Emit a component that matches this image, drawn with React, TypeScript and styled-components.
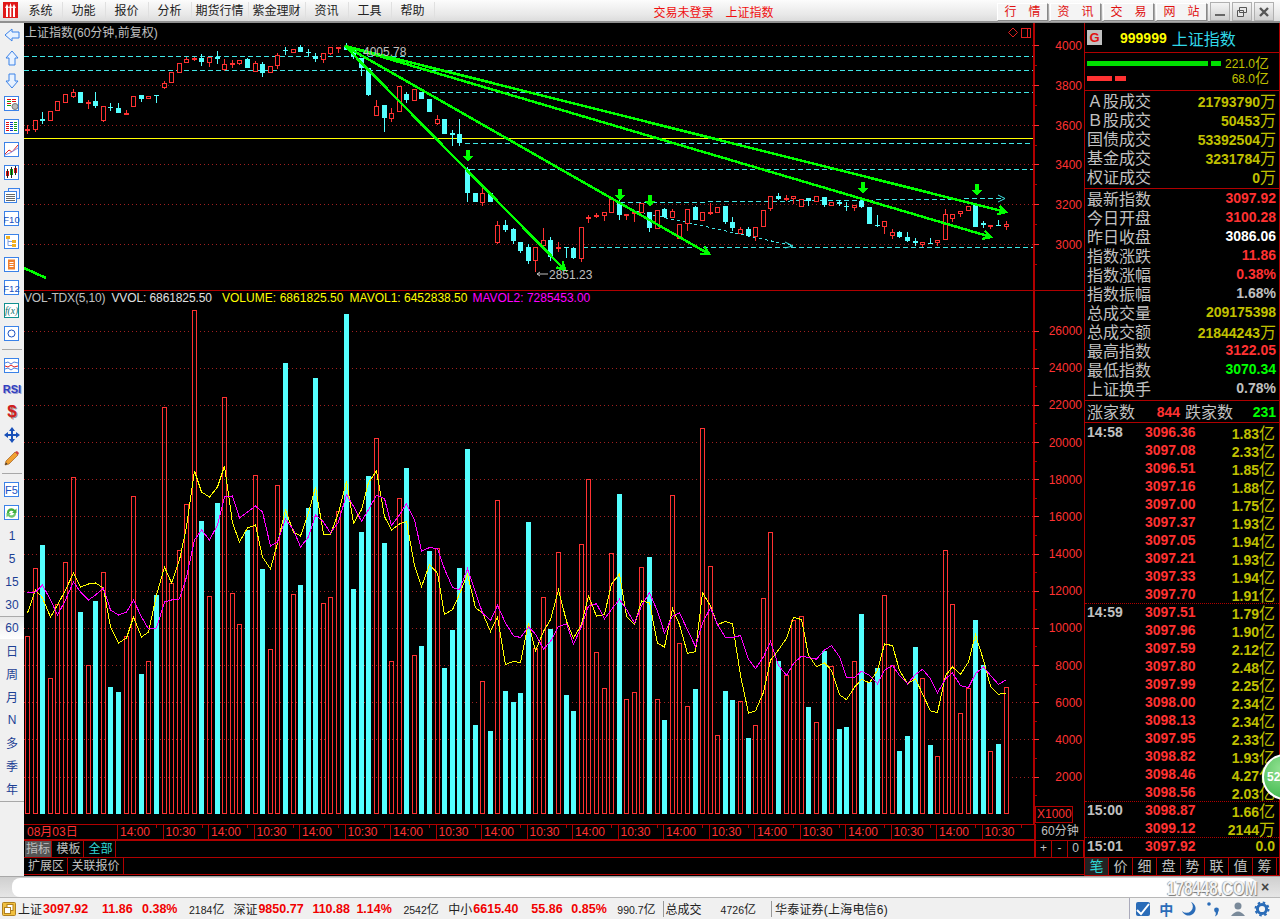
import React from "react";
import styled, { createGlobalStyle } from "styled-components";

const FONT = `"Liberation Sans","Noto Sans CJK SC",sans-serif`;
const LINE = "#b00000";
const RED = "#ff3232";
const CYAN = "#54ffff";
const OLIVE = "#c0c000";
const GRAY = "#c0c0c0";

const Global = createGlobalStyle`
  html, body { margin: 0; padding: 0; background: #000; }
  #root { width: 1280px; height: 919px; overflow: hidden; }
  * { box-sizing: border-box; }
`;

/* ---------- styled parts ---------- */
const Page = styled.div`
  width: 1280px;
  height: 919px;
  display: flex;
  flex-direction: column;
  background: #000;
  font-family: ${FONT};
  overflow: hidden;
`;
const TopBar = styled.div`
  height: 23px;
  flex: none;
  display: flex;
  align-items: center;
  padding-top: 2px;
  background: linear-gradient(#fcfcfc, #e8e8e8 70%, #dcdcdc);
  border-bottom: 2px solid #909090;
`;
const Logo = styled.div`
  width: 19.5px;
  padding-left: 3px;
  display: flex;
  align-self: flex-start;
`;
const MenuItem = styled.div<{ $w: number }>`
  width: ${(p) => p.$w}px;
  text-align: center;
  font-size: 12px;
  color: #222;
  line-height: 19px;
  border-right: 1px solid #e0e0e0;
`;
const Notice = styled.div<{ $gap?: number }>`
  margin-left: ${(p) => p.$gap ?? 219}px;
  font-size: 12px;
  color: #f01010;
`;
const TopButtons = styled.div`
  margin-left: auto;
  display: flex;
  gap: 2px;
`;
const TopButton = styled.div`
  width: 51px;
  height: 18px;
  font-size: 12px;
  line-height: 17px;
  text-align: center;
  color: #e01010;
  background: #f4f4f4;
  border: 1px solid;
  border-color: #fff #888 #888 #fff;
  box-shadow: 1px 1px 0 #aaa;
`;
const WinButtons = styled.div`
  margin-left: 3px;
  margin-right: 6px;
  display: flex;
  gap: 2px;
`;
const WinButton = styled.div`
  width: 20px;
  height: 19px;
  display: flex;
  align-items: center;
  justify-content: center;
  background: linear-gradient(#f4f4f4, #d0d0d0);
  border: 1px solid #b0b0b0;
`;
const Body = styled.div`
  flex: 1;
  display: flex;
  min-height: 0;
`;
const Sidebar = styled.div`
  width: 24px;
  flex: none;
  display: flex;
  flex-direction: column;
  background: #f0f0f0;
`;
const SideItem = styled.div<{ $active?: boolean }>`
  height: 23px;
  flex: none;
  display: flex;
  align-items: center;
  justify-content: center;
  font-size: 12px;
  color: #1c3f94;
  ${(p) => p.$active && `background: linear-gradient(#e8e8e8, #fff); border-top: 1px solid #aaa;`}
`;
const SideRule = styled.div`
  height: 1px;
  margin: 4px 2px 4px;
  background: #a8a8a8;
  flex: none;
`;
const SideEnd = styled.div`
  border-top: 1px solid #a8a8a8;
  margin-top: 1px;
  flex: 1;
`;
const RsiGlyph = styled.span`
  font: bold 11px "Liberation Sans", sans-serif;
  color: #3040c0;
  text-shadow: 1px 1px 0 #a0a0d0;
`;
const DollarGlyph = styled.span`
  font: bold 17px "Liberation Sans", sans-serif;
  color: #d02020;
  text-shadow: 1px 1px 0 #999;
`;
const Main = styled.div`
  width: 1060px;
  flex: none;
  display: flex;
  flex-direction: column;
`;
const Pane = styled.div<{ $h: number; $noBorder?: boolean }>`
  position: relative;
  height: ${(p) => p.$h}px;
  flex: none;
  ${(p) => !p.$noBorder && `border-bottom: 1px solid ${LINE};`}
`;
const ChartSvg = styled.svg`
  display: block;
`;
const ChartText = styled.text`
  font: 12px "Liberation Sans", sans-serif;
`;
const PaneTitle = styled.div`
  position: absolute;
  left: 1px;
  top: 3px;
  font-size: 12px;
  line-height: 14px;
  color: ${GRAY};
`;
const IndicatorLine = styled.div`
  position: absolute;
  left: 0;
  top: 0;
  display: flex;
  font-size: 12px;
  line-height: 14px;
`;
const Ind = styled.span<{ $c: string; $ml?: number; $ls?: number }>`
  color: ${(p) => p.$c};
  margin-left: ${(p) => p.$ml ?? 0}px;
  letter-spacing: ${(p) => p.$ls ?? 0}px;
`;
const TimeRow = styled.div`
  height: 16px;
  flex: none;
  display: flex;
`;
const TimeAxis = styled.div`
  width: 1010px;
  display: flex;
  border-top: 1px solid ${LINE};
  border-bottom: 1px solid ${LINE};
`;
const DateCell = styled.div`
  width: 93px;
  flex: none;
  padding-left: 3px;
  font-size: 12px;
  line-height: 14px;
  color: ${RED};
`;
const TimeCell = styled.div`
  position: relative;
  width: 45.5px;
  flex: none;
  padding-left: 2px;
  font-size: 12px;
  line-height: 14px;
  color: ${RED};
  border-left: 1px solid ${LINE};
  &::after {
    content: "";
    position: absolute;
    left: 38px;
    top: 0;
    width: 1px;
    height: 3px;
    background: ${LINE};
  }
`;
const PeriodCell = styled.div`
  flex: 1;
  text-align: center;
  font-size: 12px;
  line-height: 15px;
  color: ${GRAY};
  border-left: 2px solid ${LINE};
`;
const TabRow = styled.div`
  height: 17px;
  flex: none;
  display: flex;
  justify-content: space-between;
  border-top: 1px solid ${LINE};
  padding-left: 1px;
`;
const TabBar = styled.div`
  display: flex;
  gap: 2px;
`;
const ExtRow = styled.div`
  height: 18px;
  flex: none;
  display: flex;
  padding-left: 1px;
  border-top: 1px solid ${LINE};
  border-bottom: 1px solid ${LINE};
`;
const Tab = styled.div<{ $w: number; $active?: boolean; $cyan?: boolean }>`
  width: ${(p) => p.$w}px;
  text-align: center;
  font-size: 12px;
  line-height: 17px;
  color: ${(p) => (p.$cyan ? "#30d8d8" : GRAY)};
  background: ${(p) => (p.$active ? "#555" : "transparent")};
  border-right: 1px solid ${LINE};
`;
const ZoomCells = styled.div`
  width: 50px;
  display: flex;
  border-left: 2px solid ${LINE};
`;
const ZoomCell = styled.div`
  flex: 1;
  text-align: center;
  font-size: 12px;
  line-height: 15px;
  color: ${GRAY};
  border-right: 1px solid ${LINE};
`;
const Panel = styled.div`
  position: relative;
  width: 196px;
  flex: none;
  display: flex;
  flex-direction: column;
  border-left: 1px solid ${LINE};
  border-right: 1px solid ${LINE};
  color: ${GRAY};
`;
const Head = styled.div`
  height: 30px;
  flex: none;
  display: flex;
  align-items: center;
  padding-left: 2px;
  border-bottom: 1px solid ${LINE};
`;
const GBox = styled.div`
  width: 15px;
  height: 15px;
  text-align: center;
  background: #c0c0c0;
  color: #e01010;
  font: bold 13px/15px "Liberation Sans", sans-serif;
`;
const Code = styled.div`
  margin-left: 18px;
  font-weight: bold;
  font-size: 14px;
  color: #ffff00;
`;
const CodeName = styled.div`
  margin-left: 5px;
  font-size: 16px;
  color: #30d8e8;
`;
const Flow = styled.div`
  height: 38px;
  flex: none;
  padding: 3px 0 0 2px;
  border-bottom: 1px solid ${LINE};
`;
const FlowRow = styled.div`
  height: 15px;
  display: flex;
  align-items: center;
`;
const FlowBar = styled.div<{ $c: string; $w: number; $gap?: number }>`
  width: ${(p) => p.$w}px;
  height: 5px;
  margin-left: ${(p) => p.$gap ?? 0}px;
  background: ${(p) => p.$c};
`;
const FlowText = styled.div`
  margin-left: auto;
  margin-right: 10px;
  margin-bottom: 3px;
  font-size: 12px;
  color: ${OLIVE};
  small { font-size: 14px; }
`;
const StatBlock = styled.div<{ $h: number }>`
  height: ${(p) => p.$h}px;
  flex: none;
  border-bottom: 1px solid ${LINE};
`;
const StatRow = styled.div`
  height: 19px;
  display: flex;
  align-items: center;
  justify-content: space-between;
  padding: 0 3px 0 2px;
`;
const StatLabel = styled.div<{ $gap?: number }>`
  font-size: 16px;
  line-height: 19px;
  color: ${GRAY};
  margin-left: ${(p) => p.$gap ?? 0}px;
  margin-top: 2px;
`;
const StatValue = styled.div<{ $c: string }>`
  font-weight: bold;
  font-size: 14px;
  margin-bottom: 2px;
  color: ${(p) => p.$c};
`;
const Unit = styled.span`
  font-weight: normal;
  font-size: 16px;
  color: ${OLIVE};
`;
const UpDown = styled.div`
  height: 22px;
  flex: none;
  display: flex;
  align-items: center;
  padding-left: 2px;
  border-bottom: 1px solid ${LINE};
`;
const UpCount = styled.div<{ $c: string; $w: number }>`
  width: ${(p) => p.$w}px;
  text-align: right;
  font-weight: bold;
  font-size: 14px;
  color: ${(p) => p.$c};
`;
const TickList = styled.div`
  flex: 1;
  min-height: 0;
`;
const TickGroup = styled.div`
  border-bottom: 1px dotted ${LINE};
  &:last-child { border-bottom: none; }
  margin-bottom: -1px;
`;
const TickRow = styled.div`
  height: 18px;
  display: flex;
  align-items: center;
  padding: 0 4px 0 2px;
`;
const TickTime = styled.div`
  width: 58px;
  font-weight: bold;
  font-size: 14px;
  color: ${GRAY};
`;
const TickPrice = styled.div`
  font-weight: bold;
  font-size: 14px;
  color: ${RED};
`;
const TickAmount = styled.div`
  margin-left: auto;
  font-weight: bold;
  font-size: 14px;
  color: ${OLIVE};
`;
const PanelTabs = styled.div`
  height: 19px;
  flex: none;
  display: flex;
  border-top: 1px solid ${LINE};
  border-bottom: 1px solid ${LINE};
`;
const PanelTab = styled.div<{ $on: boolean }>`
  width: 24px;
  text-align: center;
  font-size: 14px;
  line-height: 16px;
  color: ${(p) => (p.$on ? "#30d8d8" : GRAY)};
  background: ${(p) => (p.$on ? "#222" : "transparent")};
  border-right: 1px solid ${LINE};
`;
const Badge = styled.div`
  position: absolute;
  left: 177px;
  top: 731px;
  width: 46px;
  height: 46px;
  border-radius: 50%;
  padding-left: 3px;
  background: radial-gradient(circle at 40% 30%, #90e090, #30b040);
  border: 2px solid #fff;
  font: bold 12px/42px "Liberation Sans", sans-serif;
  color: #fff;
`;
const InputBar = styled.div`
  position: relative;
  height: 22px;
  flex: none;
  display: flex;
  align-items: center;
  padding-left: 12px;
  background: linear-gradient(#cfcfcf, #e6e6e6);
  border-top: 1px solid #a8a8a8;
  border-bottom: 1px solid #b8b8b8;
`;
const InputField = styled.div`
  width: 1245px;
  height: 19px;
  background: #fff;
  border-radius: 8px;
`;
const CloseX = styled.div`
  margin-left: 4px;
  font: bold 14px "Liberation Sans", sans-serif;
  color: #444;
`;
const Watermark = styled.div`
  position: absolute;
  left: 1167px;
  top: 1px;
  font: bold 20px/20px "Liberation Sans", sans-serif;
  transform: scaleX(0.76);
  transform-origin: left center;
  white-space: nowrap;
  color: rgba(255, 255, 255, 0.92);
  text-shadow: 1px 1px 1px #777, -1px 0 1px #999;
`;
const StatusBar = styled.div`
  height: 21px;
  flex: none;
  display: flex;
  align-items: center;
  background: #f0f0f0;
`;
const StatusLogo = styled.svg`
  margin: 0 2px;
  flex: none;
`;
const SLabel = styled.div<{ $ml?: number; $ls?: number }>`
  margin-left: ${(p) => p.$ml ?? 0}px;
  letter-spacing: ${(p) => p.$ls ?? 0}px;
  font-size: 12px;
  color: #222;
  white-space: nowrap;
`;
const SNum = styled.div<{ $w: number; $ml?: number }>`
  width: ${(p) => p.$w}px;
  margin-left: ${(p) => p.$ml ?? 0}px;
  font-weight: bold;
  font-size: 12.5px;
  color: #f00000;
  white-space: nowrap;
`;
const SAmt = styled.div<{ $ml?: number }>`
  margin-left: ${(p) => p.$ml ?? 0}px;
  font-size: 10.5px;
  color: #222;
  white-space: nowrap;
  i { font-style: normal; font-size: 12px; }
`;
const SDivider = styled.div<{ $ml?: number }>`
  width: 1px;
  height: 16px;
  margin-left: ${(p) => p.$ml ?? 7}px;
  background: #999;
`;
const StatusIcons = styled.div`
  margin-left: auto;
  width: 151px;
  height: 100%;
  display: flex;
  align-items: center;
  justify-content: space-between;
  padding: 0 10px 0 5px;
  background: #f4f4f4;
  border-left: 1px solid #aab;
`;
const ZhGlyph = styled.span`
  font: bold 14px "Noto Sans CJK SC", sans-serif;
  color: #2a6cb8;
`;

/* ---------- chart data ---------- */
const barX = (i: number) => Math.round(25 + 7.586 * i);
const fix = (z: number) => 290 + z / 2.958;

type Bar = ["r" | "c", number];
const barsA: Bar[] = [
  ["r",636],["r",568],["c",545],["r",678],["r",604],["r",562],["r",477],["c",612],["r",665],["c",601],
  ["r",572],["c",687],["c",692],["r",636],["r",496],["c",674],["r",661],["c",595],["r",407],["r",583],
  ["r",550],["r",504],["r",310],["c",521],["r",596],["c",503],["r",397],["r",593],["r",624],["c",530],
  ["r",475],["c",569],["r",649],["r",485],["c",363],["r",594],["c",585],["c",508],["c",378],["r",603],
  ["r",597],["r",511],
];
const barsB: Bar[] = (
  [
    ["c",71],["c",885],["c",716],["c",550],["r",439],["c",748],["r",1096],["r",616],["c",527],["r",1081],
    ["c",1053],["c",772],["r",764],["c",1118],["c",1006],["c",822],["c",470],["c",1287],["r",1158],["c",1305],
    ["r",622],["c",1186],["c",1219],["c",1192],["c",686],["r",1060],["r",909],["c",1003],["r",776],["c",1198],
    ["c",1246],["r",752],["r",560],["r",1072],["r",1176],["r",779],["c",604],["r",1211],["r",1190],["r",818],
    ["c",790],["r",1211],["c",1272],["r",607],["r",1045],["r",1232],["c",1180],["r",409],["r",815],
    ["r",1315],["c",1186],["c",1213],["r",1217],["c",1325],["r",1288],["r",912],["r",717],["c",1098],["r",1140],
    ["r",976],["r",965],["c",1234],["r",1279],["c",1068],["r",1113],["c",1299],["c",1293],["r",1096],["c",959],
    ["c",1160],["c",1118],["r",903],["r",1109],["c",1364],["c",1319],["c",1056],["r",1149],["c",1346],["r",1377],
    ["r",770],["r",930],["r",1252],["r",1178],["c",976],["c",1109],["r",1365],["c",1343],["r",1173],
  ] as Bar[]
).map(([t, z]) => [t, fix(z)] as Bar);
const bars = [...barsA, ...barsB];

const yellowA = [613,590,598,617,605,590,573,587,584,583,588,627,643,638,617,637,632,595,567,583,560,527,471,492,497,487,466,523,542,528,525,557,569,543,510,532,536,513,487,534,534,513];
const yellowB = [565,690,650,570,535,670,710,692,685,815,878,812,838,960,945,900,840,940,955,1010,968,1108,1098,1103,985,1068,1010,975,887,980,1030,990,905,965,960,870,840,965,990,920,925,1045,1056,942,990,1075,1070,895,935,
  990,980,988,1140,1252,1245,1190,1095,1065,1030,968,975,1080,1115,1103,1125,1197,1212,1175,1152,1162,1125,1047,1052,1125,1165,1150,1195,1245,1250,1140,1115,1137,1100,1020,1095,1172,1196,1192];
const magentaA = [593,592,585,600,615,600,582,592,600,595,588,610,615,612,600,617,629,628,602,600,599,577,540,530,540,525,497,496,518,512,506,512,546,542,519,530,547,537,515,522,533,522];
const magentaB = [605,640,684,650,607,617,697,665,632,680,772,762,765,825,880,887,825,895,955,978,933,985,1023,1028,997,1018,1062,1040,995,987,1048,995,935,928,973,945,915,945,985,935,895,950,1015,965,955,1005,1055,985,940,
  990,1028,1028,1022,1092,1120,1085,1040,1110,1140,1105,1083,1087,1092,1065,1052,1085,1146,1146,1128,1140,1165,1125,1110,1140,1165,1137,1122,1150,1192,1150,1133,1170,1176,1135,1115,1140,1167,1152];
const pts = (a: number[], b: number[]) =>
  [...a, ...b.map(fix)].map((y, i) => `${barX(i) + 2.5},${y.toFixed(1)}`).join(" ");

type Candle = ["r" | "c", number, number, number, number];
const candles: Candle[] = [
  ["r",387,391,375,403],["r",361,389,361,395],["c",358,362,337,372],["r",332,364,332,364],["r",304,332,304,332],
  ["r",283,308,283,308],["r",276,290,268,295],["c",276,308,276,308],["r",305,312,300,326],["c",303,318,276,323],
  ["r",319,362,319,365],["c",320,323,310,332],["c",324,338,309,338],["r",338,341,331,346],["r",287,320,287,320],
  ["c",286,296,286,305],["r",287,298,287,298],["c",286,288,286,309],["r",248,265,244,268],["r",217,248,217,248],
  ["r",190,218,190,218],["r",178,188,170,190],["r",175,179,170,184],["c",174,186,163,198],["r",172,188,172,200],
  ["c",170,176,153,192],["r",193,209,178,212],["r",188,192,180,204],["r",179,191,179,196],["c",177,204,174,204],
  ["r",190,215,184,215],["c",191,218,187,230],["r",197,218,197,218],["r",165,197,160,206],["c",150,154,141,165],
  ["r",146,158,146,158],["c",142,155,136,155],["c",156,160,147,169],["c",168,178,160,185],["r",160,181,160,188],
  ["r",142,162,142,165],["r",140,145,140,159],["c",137,149,130,149],["c",150,172,150,178],["c",175,205,175,227],
  ["c",205,285,205,287],["r",317,347,300,347],["c",315,353,315,397],["r",338,356,325,366],["r",257,337,257,337],
  ["c",283,300,276,308],["r",268,302,268,302],["c",275,297,275,297],["c",298,335,298,335],
  ["r",357,371,345,376],["c",357,402,357,402],["c",400,404,390,437],["c",403,430,357,437],["c",508,578,500,605],
  ["c",579,607,579,607],["r",580,608,560,617],["c",578,607,578,607],["r",676,730,663,732],["c",675,690,660,697],
  ["c",687,722,685,732],["c",726,753,726,760],["c",742,783,733,792],["r",740,782,740,815],["r",721,737,683,737],
  ["c",720,772,710,782],["r",742,746,727,756],["c",742,745,742,773],["c",745,773,740,776],["r",682,776,682,785],
  ["r",652,658,645,668],["r",646,652,638,655],["r",637,648,637,663],["r",597,638,590,638],["c",610,645,600,660],
  ["r",642,648,642,660],["r",637,641,637,665],["r",610,640,610,640],["c",637,683,637,697],["r",631,686,631,686],
  ["c",628,651,624,653],["r",634,653,627,653],["r",673,716,673,716],["r",628,673,628,692],["c",620,660,617,660],
  ["r",636,663,636,663],["r",637,642,610,645],["r",622,638,622,638],["c",618,665,618,672],["c",666,683,652,692],
  ["r",688,701,680,703],["c",687,708,680,710],["r",680,712,680,724],["r",631,680,631,680],["r",589,626,589,632],
  ["c",588,596,580,600],["r",594,598,586,603],["r",589,597,589,612],["r",596,620,596,622],["c",595,603,595,617],
  ["r",589,607,589,607],["c",591,614,591,620],["r",606,619,606,619],["c",606,613,600,617],["c",617,620,607,632],
  ["r",614,624,614,632],["c",602,622,600,624],["c",620,672,620,672],["c",675,678,645,680],["r",664,680,664,702],
  ["r",696,708,688,716],["c",696,710,693,714],["c",711,723,695,725],["c",724,728,714,738],["r",727,735,727,740],
  ["c",728,730,714,733],["r",721,728,721,737],["r",642,721,628,721],["r",641,656,641,667],["r",632,642,632,650],
  ["r",618,633,618,633],["c",616,680,616,680],["c",670,676,663,684],["r",674,680,674,686],["c",674,677,661,677],
  ["r",672,680,663,690],
];

const priceGrid = [45, 85, 125, 164, 204, 244];
const priceLabels = ["4000", "3800", "3600", "3400", "3200", "3000"];
const volGrid = Array.from({ length: 13 }, (_, k) => 330.5 + 37.17 * k);
const volLabels = ["26000","24000","22000","20000","18000","16000","14000","12000","10000","8000","6000","4000","2000"];

const GreenArrow = ({ x, y }: { x: number; y: number }) => (
  <polygon points={`${x - 2},${y - 6} ${x + 2},${y - 6} ${x + 2},${y} ${x + 5},${y} ${x},${y + 6} ${x - 5},${y} ${x - 2},${y}`} fill="#00ff00" shapeRendering="crispEdges" />
);

const Trend = ({ x, y, tx, ty }: { x: number; y: number; tx: number; ty: number }) => {
  const a = Math.atan2(ty - y, tx - x);
  const hx1 = tx - 9 * Math.cos(a - 0.5), hy1 = ty - 9 * Math.sin(a - 0.5);
  const hx2 = tx - 9 * Math.cos(a + 0.5), hy2 = ty - 9 * Math.sin(a + 0.5);
  return (
    <g stroke="#00ff00" strokeWidth={2.5} shapeRendering="crispEdges" fill="none">
      <line x1={x} y1={y} x2={tx} y2={ty} />
      <polyline points={`${hx1},${hy1} ${tx},${ty} ${hx2},${hy2}`} />
    </g>
  );
};

const PriceChart = () => (
  <ChartSvg viewBox="24 23 1060 267" width={1060} height={267}>
    {priceGrid.map((y) => (
      <line key={y} x1={24} x2={1033} y1={y + 0.5} y2={y + 0.5} stroke="#a02020" strokeDasharray="1 3" />
    ))}
    <g stroke="#3fe6e6" strokeDasharray="5 3" shapeRendering="crispEdges">
      <line x1={24} x2={1033} y1={56.5} y2={56.5} />
      <line x1={24} x2={1033} y1={70.5} y2={70.5} />
      <line x1={424} x2={1033} y1={92.5} y2={92.5} />
      <line x1={465} x2={1033} y1={143.5} y2={143.5} />
      <line x1={470} x2={1033} y1={169.5} y2={169.5} />
      <line x1={583} x2={1033} y1={247.5} y2={247.5} />
      <line x1={620} x2={1004} y1={203} y2={198.5} />
      <line x1={630} x2={792} y1={210} y2={245.5} strokeDasharray="3 3" />
    </g>
    <polyline points="998,195 1005,198.5 998,202" stroke="#3fe6e6" fill="none" />
    <polyline points="785,242 793,246 785,248" stroke="#3fe6e6" fill="none" />
    <line x1={24} x2={1033} y1={138.5} y2={138.5} stroke="#ffff00" shapeRendering="crispEdges" />

    {candles.map(([t, bt, bb, wt, wb], i) => {
      const x = barX(i);
      const col = t === "r" ? RED : CYAN;
      return (
        <g key={i} shapeRendering="crispEdges">
          <line x1={x + 2.5} x2={x + 2.5} y1={wt / 3} y2={wb / 3} stroke={col} />
          {t === "r" ? (
            <rect x={x + 0.5} y={bt / 3 + 0.5} width={4} height={Math.max(1, (bb - bt) / 3 - 1)} fill="#000" stroke={col} />
          ) : (
            <rect x={x} y={bt / 3} width={5} height={Math.max(1, (bb - bt) / 3)} fill={col} />
          )}
        </g>
      );
    })}

    <Trend x={345} y={46} tx={1006} ty={212} />
    <Trend x={345} y={46} tx={991} ty={237} />
    <Trend x={345} y={46} tx={709} ty={254} />
    <Trend x={345} y={46} tx={565} ty={270} />
    <line x1={24} y1={268} x2={46} y2={278} stroke="#00ff00" strokeWidth={2.5} shapeRendering="crispEdges" />
    <GreenArrow x={468} y={156} />
    <GreenArrow x={620} y={195} />
    <GreenArrow x={650} y={201} />
    <GreenArrow x={863} y={188} />
    <GreenArrow x={977} y={190} />

    <ChartText x={363} y={56} fill={GRAY}>4005.78</ChartText>
    <path d="M537 274 h11 M537 274 l3 -2 M537 274 l3 2" stroke={GRAY} fill="none" />
    <ChartText x={549} y={279} fill={GRAY}>2851.23</ChartText>

    <polygon points="1013,28 1017.5,32.5 1013,37 1008.5,32.5" fill="none" stroke="#e02020" />
    <rect x={1021.5} y={28.5} width={9} height={9} fill="none" stroke="#e02020" />
    <line x1={1027.5} x2={1027.5} y1={28} y2={37} stroke="#e02020" />

    <line x1={1034} x2={1034} y1={23} y2={290} stroke={LINE} strokeWidth={2} />
    {priceGrid.map((y, i) => (
      <g key={y}>
        <line x1={1034} x2={1039} y1={y + 0.5} y2={y + 0.5} stroke={RED} />
        <line x1={1034} x2={1037} y1={y + 20.5} y2={y + 20.5} stroke={LINE} />
        <ChartText x={1082} y={y + 4.5} fill={RED} textAnchor="end">{priceLabels[i]}</ChartText>
      </g>
    ))}
  </ChartSvg>
);

const VolumeChart = () => (
  <ChartSvg viewBox="24 291 1060 533" width={1060} height={533}>
    {volGrid.map((y) => (
      <line key={y} x1={24} x2={1033} y1={Math.round(y) + 0.5} y2={Math.round(y) + 0.5} stroke="#a02020" strokeDasharray="1 3" />
    ))}
    {bars.map(([t, top], i) =>
      t === "r" ? (
        <rect key={i} x={barX(i) + 0.5} y={Math.round(top) + 0.5} width={4} height={813 - Math.round(top)} fill="none" stroke={RED} shapeRendering="crispEdges" />
      ) : (
        <rect key={i} x={barX(i)} y={Math.round(top)} width={5} height={814 - Math.round(top)} fill={CYAN} shapeRendering="crispEdges" />
      )
    )}
    <polyline points={pts(yellowA, yellowB)} fill="none" stroke="#ffff00" shapeRendering="crispEdges" />
    <polyline points={pts(magentaA, magentaB)} fill="none" stroke="#ff00ff" shapeRendering="crispEdges" />

    <line x1={1034} x2={1034} y1={291} y2={824} stroke={LINE} strokeWidth={2} />
    {volGrid.map((y, i) => (
      <g key={y}>
        <line x1={1034} x2={1039} y1={Math.round(y) + 0.5} y2={Math.round(y) + 0.5} stroke={RED} />
        <line x1={1034} x2={1037} y1={Math.round(y + 18.6) + 0.5} y2={Math.round(y + 18.6) + 0.5} stroke={LINE} />
        <ChartText x={1082} y={y + 4.5} fill={RED} textAnchor="end">{volLabels[i]}</ChartText>
      </g>
    ))}
    <rect x={1035.5} y={806.5} width={37} height={16} fill="none" stroke={LINE} />
    <ChartText x={1037} y={818} fill={RED}>X1000</ChartText>
  </ChartSvg>
);

/* ---------- icons ---------- */
const BLUE = "#3b82e8";
const Frame = ({ children, stroke = BLUE }: { children: React.ReactNode; stroke?: string }) => (
  <svg width={16} height={16} viewBox="0 0 16 16">
    <rect x={0.5} y={0.5} width={14} height={14} fill="#fff" stroke={stroke} />
    {children}
  </svg>
);
const Fk = ({ t }: { t: string }) => (
  <text x={7.5} y={11.5} textAnchor="middle" fontSize={t.length > 2 ? 9.5 : 11} fontFamily="Liberation Sans" fill="#1a50c0">{t}</text>
);
const ArrowIcon = ({ rot }: { rot: number }) => (
  <svg width={16} height={16} viewBox="0 0 16 16">
    <path d="M8 1 L14 8 H11 V15 H5 V8 H2 Z" fill="#e8f2ff" stroke="#3b82e8" transform={`rotate(${rot} 8 8)`} />
  </svg>
);
const Hbar = ({ y, c, x = 3, w = 9 }: { y: number; c: string; x?: number; w?: number }) => (
  <rect x={x} y={y} width={w} height={1} fill={c} />
);
const sidebarIcons: React.ReactNode[] = [
  <ArrowIcon rot={-90} />,
  <ArrowIcon rot={0} />,
  <ArrowIcon rot={180} />,
  <Frame>
    <Hbar y={3} c="#e01010" w={4} /><Hbar y={5} c="#10a010" w={4} /><Hbar y={7} c="#e01010" w={4} /><Hbar y={9} c="#10a010" w={4} />
    <Hbar y={3} x={8} c="#e01010" w={4} /><Hbar y={5} x={8} c="#e01010" w={4} />
    <circle cx={11} cy={10.5} r={3} fill="#bbb" stroke="#777" />
  </Frame>,
  <Frame>
    {[3, 5, 7, 9, 11].map((y) => (
      <g key={y}><Hbar y={y} x={2} w={3} c="#e01010" /><Hbar y={y} x={6} w={3} c="#1030d0" /><Hbar y={y} x={10} w={3} c="#10a010" /></g>
    ))}
  </Frame>,
  <Frame>
    <polyline points="1,12 5,8 8,10 14,3" fill="none" stroke="#e02020" />
    <polyline points="1,13 6,11 14,6" fill="none" stroke="#9090e0" />
  </Frame>,
  <Frame>
    <rect x={2} y={6} width={3} height={5} fill="#e01010" /><rect x={6} y={4} width={3} height={6} fill="#10a010" /><rect x={10} y={3} width={3} height={5} fill="#e01010" />
    <path d="M3.5 4V13M7.5 2V13M11.5 1V10" stroke="#222" />
  </Frame>,
  <svg width={16} height={16} viewBox="0 0 16 16">
    <rect x={4.5} y={0.5} width={11} height={10} fill="#eef" stroke={BLUE} />
    <rect x={0.5} y={3.5} width={12} height={11} fill="#fff" stroke={BLUE} />
    <path d="M2 6.5H11M2 8.5H11M2 10.5H11M2 12.5H11" stroke="#666" />
  </svg>,
  <Frame><Fk t="F10" /></Frame>,
  <Frame>
    <rect x={2} y={2} width={4} height={3} fill="#f0b020" /><rect x={8} y={6} width={4} height={3} fill="#f0b020" /><rect x={8} y={10} width={4} height={3} fill="#f0b020" />
    <path d="M4 5V11.5H8M4 7.5H8" stroke="#80a0e0" fill="none" />
  </Frame>,
  <Frame>
    <rect x={4} y={2.5} width={7} height={10} fill="#f08030" />
    <path d="M5.5 5.5H9.5M5.5 7.5H9.5M5.5 9.5H9.5" stroke="#fff" />
  </Frame>,
  <Frame><Fk t="F12" /></Frame>,
  <Frame stroke="#109090">
    <text x={7.5} y={11} textAnchor="middle" fontSize={9.5} fontFamily="Liberation Serif" fontStyle="italic" fill="#107070">f(x)</text>
  </Frame>,
  <Frame><circle cx={7.5} cy={7.5} r={3.5} fill="none" stroke="#1a50c0" /></Frame>,
];
const sidebarIcons2: React.ReactNode[] = [
  <Frame>
    <path d="M1 5 L4 4 L7 6 L10 4 L14 5" stroke="#5080e0" fill="none" />
    <path d="M1 8 L4 9 L7 7 L10 9 L14 8" stroke="#e02020" fill="none" />
    <path d="M1 11 L4 10 L7 12 L10 10 L14 11" stroke="#5080e0" fill="none" />
  </Frame>,
  <RsiGlyph>RSI</RsiGlyph>,
  <DollarGlyph>$</DollarGlyph>,
  <svg width={16} height={16} viewBox="0 0 16 16">
    <path d="M8 0L11 4H9V7H12V5L16 8L12 11V9H9V12H11L8 16L5 12H7V9H4V11L0 8L4 5V7H7V4H5Z" fill="#1850b8" />
  </svg>,
  <svg width={16} height={16} viewBox="0 0 16 16">
    <path d="M1 15 L2 11 L11 2 L14 5 L5 14 Z" fill="#f0a030" stroke="#a06020" strokeWidth={0.7} />
    <path d="M11 2 L14 5 L15 3 L13 1Z" fill="#d04040" />
    <path d="M1 15 L2 12.5 L3.5 14Z" fill="#333" />
  </svg>,
];
const sidebarIcons3: React.ReactNode[] = [
  <Frame><Fk t="F5" /></Frame>,
  <Frame>
    <path d="M3 8 A4.5 4.5 0 0 1 11 5 L12.5 3.5 V8 H8 L9.5 6.5 A2.6 2.6 0 0 0 5 8Z" fill="#40b040" />
    <path d="M12 8 A4.5 4.5 0 0 1 4 11 L2.5 12.5 V8 H7 L5.5 9.5 A2.6 2.6 0 0 0 10 8Z" fill="#70c870" />
  </Frame>,
];

const StatusIconPack = () => (
  <StatusIcons>
    <svg width={16} height={16} viewBox="0 0 16 16">
      <rect x={1} y={1} width={14} height={14} rx={2} fill="#2a6cb8" />
      <path d="M2 9 L6 13 L14 3" stroke="#fff" strokeWidth={2} fill="none" />
    </svg>
    <ZhGlyph>中</ZhGlyph>
    <svg width={16} height={16} viewBox="0 0 16 16">
      <path d="M10 1 A7 7 0 1 1 1 10 A6 6 0 0 0 10 1Z" fill="#2a6cb8" />
    </svg>
    <svg width={16} height={16} viewBox="0 0 16 16">
      <circle cx={3} cy={3} r={1.8} fill="#2a6cb8" />
      <circle cx={10.5} cy={9} r={2.4} fill="#2a6cb8" />
      <path d="M12 10 Q12.5 14 9 15.5 Q10.5 13 9.5 11Z" fill="#2a6cb8" />
    </svg>
    <svg width={16} height={16} viewBox="0 0 16 16">
      <circle cx={8} cy={5} r={3.5} fill="#7a8a9a" />
      <path d="M1 15 Q8 6 15 15Z" fill="#7a8a9a" />
    </svg>
    <svg width={16} height={16} viewBox="0 0 16 16">
      <circle cx={8} cy={8} r={4.6} fill="none" stroke="#2a6cb8" strokeWidth={3} />
      <circle cx={8} cy={8} r={6.5} fill="none" stroke="#2a6cb8" strokeWidth={2} strokeDasharray="2.5 2.6" />
    </svg>
  </StatusIcons>
);

/* ---------- page ---------- */
const menu: [string, number][] = [
  ["系统",43],["功能",43],["报价",43],["分析",43],["期货行情",57],["紫金理财",57],["资讯",43],["工具",43],["帮助",43],
];
const times = Array.from({ length: 20 }, (_, k) => (k % 2 === 0 ? "14:00" : "10:30"));

type Stat = [string, string, string?];
const stats1: Stat[] = [
  ["Ａ股成交","21793790","万"],["Ｂ股成交","50453","万"],["国债成交","53392504","万"],["基金成交","3231784","万"],["权证成交","0","万"],
];
const stats2: [string, string, string][] = [
  ["最新指数","3097.92",RED],["今日开盘","3100.28",RED],["昨日收盘","3086.06","#fff"],["指数涨跌","11.86",RED],["指数涨幅","0.38%",RED],
  ["指数振幅","1.68%",GRAY],["总成交量","209175398",OLIVE],["总成交额","21844243万",OLIVE],["最高指数","3122.05",RED],["最低指数","3070.34","#00ff00"],["上证换手","0.78%",GRAY],
];
type Tick = [string, string, string, string];
const s58: Tick[] = [
  ["14:58","3096.36","1.83","亿"],["","3097.08","2.33","亿"],["","3096.51","1.85","亿"],["","3097.16","1.88","亿"],["","3097.00","1.75","亿"],
  ["","3097.37","1.93","亿"],["","3097.05","1.94","亿"],["","3097.21","1.93","亿"],["","3097.33","1.94","亿"],["","3097.70","1.91","亿"],
];
const s59: Tick[] = [
  ["14:59","3097.51","1.79","亿"],["","3097.96","1.90","亿"],["","3097.59","2.12","亿"],["","3097.80","2.48","亿"],["","3097.99","2.25","亿"],
  ["","3098.00","2.34","亿"],["","3098.13","2.34","亿"],["","3097.95","2.33","亿"],["","3098.82","1.93","亿"],["","3098.46","4.27","亿"],["","3098.56","2.03","亿"],
];
const s00: Tick[] = [["15:00","3098.87","1.66","亿"],["","3099.12","2144","万"]];
const s01: Tick[] = [["15:01","3097.92","0.0",""]];

const TickBlock = ({ rows }: { rows: Tick[] }) => (
  <TickGroup>
    {rows.map((r, i) => (
      <TickRow key={i}>
        <TickTime>{r[0]}</TickTime>
        <TickPrice>{r[1]}</TickPrice>
        <TickAmount>{r[2]}<Unit>{r[3]}</Unit></TickAmount>
      </TickRow>
    ))}
  </TickGroup>
);

export default function App() {
  return (
    <Page>
      <Global />
      <TopBar>
        <Logo>
          <svg width={15} height={16} viewBox="0 0 15 16">
            <rect width={15} height={16} fill="#e01818" />
            <path d="M2 6L4 2L6 6H5V15H3V6ZM6 6L7.5 1L9 6H8.3V15H6.7V6ZM9 6L11 2L13 6H12V15H10V6Z" fill="#fff" />
          </svg>
        </Logo>
        {menu.map(([m, w]) => (
          <MenuItem key={m} $w={w}>{m}</MenuItem>
        ))}
        <Notice>交易未登录</Notice>
        <Notice $gap={12}>上证指数</Notice>
        <TopButtons>
          {["行　情","资　讯","交　易","网　站"].map((t) => (
            <TopButton key={t}>{t}</TopButton>
          ))}
        </TopButtons>
        <WinButtons>
          <WinButton>
            <svg width={12} height={12} viewBox="0 0 12 12"><rect x={1} y={8} width={10} height={2} fill="#666" /></svg>
          </WinButton>
          <WinButton>
            <svg width={12} height={12} viewBox="0 0 12 12"><path d="M3.5 1.5h7v5h-7zM1.5 4.5h6v6h-6z" fill="#e8e8e8" stroke="#555" /></svg>
          </WinButton>
          <WinButton>
            <svg width={12} height={12} viewBox="0 0 12 12"><path d="M2 2L10 10M10 2L2 10" stroke="#555" strokeWidth={2.4} /></svg>
          </WinButton>
        </WinButtons>
      </TopBar>

      <Body>
        <Sidebar>
          {sidebarIcons.map((ic, i) => <SideItem key={i}>{ic}</SideItem>)}
          <SideRule />
          {sidebarIcons2.map((ic, i) => <SideItem key={i}>{ic}</SideItem>)}
          <SideRule />
          {sidebarIcons3.map((ic, i) => <SideItem key={i}>{ic}</SideItem>)}
          {["1","5","15","30","60","日","周","月","N","多","季","年"].map((t) => (
            <SideItem key={t} $active={t === "60"}>{t}</SideItem>
          ))}
          <SideEnd />
        </Sidebar>

        <Main>
          <Pane $h={268}>
            <PriceChart />
            <PaneTitle>上证指数(60分钟,前复权)</PaneTitle>
          </Pane>
          <Pane $h={533} $noBorder>
            <VolumeChart />
            <IndicatorLine>
              <Ind $c={GRAY} $ls={-0.15}>VOL-TDX(5,10)</Ind>
              <Ind $c="#e0e0e0" $ml={6} $ls={-0.1}>VVOL: 6861825.50</Ind>
              <Ind $c="#ffff00" $ml={10} $ls={0.05}>VOLUME: 6861825.50</Ind>
              <Ind $c="#ffff00" $ml={6}>MAVOL1: 6452838.50</Ind>
              <Ind $c="#ff00ff" $ml={5}>MAVOL2: 7285453.00</Ind>
            </IndicatorLine>
          </Pane>
          <TimeRow>
            <TimeAxis>
              <DateCell>08月03日</DateCell>
              {times.map((t, i) => <TimeCell key={i}>{t}</TimeCell>)}
            </TimeAxis>
            <PeriodCell>60分钟</PeriodCell>
          </TimeRow>
          <TabRow>
            <TabBar>
              <Tab $active $w={27}>指标</Tab>
              <Tab $w={30}>模板</Tab>
              <Tab $w={30} $cyan>全部</Tab>
            </TabBar>
            <ZoomCells>
              <ZoomCell>+</ZoomCell><ZoomCell>-</ZoomCell><ZoomCell>0</ZoomCell>
            </ZoomCells>
          </TabRow>
          <ExtRow>
            <Tab $w={43}>扩展区</Tab>
            <Tab $w={56}>关联报价</Tab>
          </ExtRow>
        </Main>

        <Panel>
          <Head>
            <GBox>G</GBox>
            <Code>999999</Code>
            <CodeName>上证指数</CodeName>
          </Head>
          <Flow>
            <FlowRow>
              <FlowBar $c="#00e000" $w={121} />
              <FlowBar $c="#00e000" $w={10} $gap={3} />
              <FlowText>221.0<small>亿</small></FlowText>
            </FlowRow>
            <FlowRow>
              <FlowBar $c="#ff3232" $w={25} />
              <FlowBar $c="#ff3232" $w={11} $gap={3} />
              <FlowText>68.0<small>亿</small></FlowText>
            </FlowRow>
          </Flow>
          <StatBlock $h={98}>
            {stats1.map(([l, v, u]) => (
              <StatRow key={l}>
                <StatLabel>{l}</StatLabel>
                <StatValue $c={OLIVE}>{v}<Unit>{u}</Unit></StatValue>
              </StatRow>
            ))}
          </StatBlock>
          <StatBlock $h={212}>
            {stats2.map(([l, v, c]) => {
              const wan = v.endsWith("万");
              return (
                <StatRow key={l}>
                  <StatLabel>{l}</StatLabel>
                  <StatValue $c={c}>{wan ? v.slice(0, -1) : v}{wan && <Unit>万</Unit>}</StatValue>
                </StatRow>
              );
            })}
          </StatBlock>
          <UpDown>
            <StatLabel>涨家数</StatLabel>
            <UpCount $c={RED} $w={45}>844</UpCount>
            <StatLabel $gap={5}>跌家数</StatLabel>
            <UpCount $c="#00ff00" $w={43}>231</UpCount>
          </UpDown>
          <TickList>
            <TickBlock rows={s58} />
            <TickBlock rows={s59} />
            <TickBlock rows={s00} />
            <TickBlock rows={s01} />
          </TickList>
          <PanelTabs>
            {["笔","价","细","盘","势","联","值","筹"].map((t, i) => (
              <PanelTab key={t} $on={i === 0}>{t}</PanelTab>
            ))}
          </PanelTabs>
          <Badge>52</Badge>
        </Panel>
      </Body>

      <InputBar>
        <InputField />
        <CloseX>×</CloseX>
        <Watermark>178448.COM</Watermark>
      </InputBar>

      <StatusBar>
        <StatusLogo width={14} height={14} viewBox="0 0 14 14">
          <rect x={0.5} y={0.5} width={13} height={13} rx={1} fill="#f0c040" stroke="#b08020" />
          <rect x={5} y={2.5} width={6} height={6} fill="#fff" stroke="#b08020" />
          <rect x={2.5} y={5.5} width={6} height={6} fill="#fff" stroke="#b08020" />
        </StatusLogo>
        <SLabel>上证</SLabel><SNum $w={46} $ml={1}>3097.92</SNum><SNum $w={31} $ml={13}>11.86</SNum><SNum $w={36} $ml={9}>0.38%</SNum>
        <SAmt $ml={11}>2184<i>亿</i></SAmt>
        <SLabel $ml={9}>深证</SLabel><SNum $w={46} $ml={1}>9850.77</SNum><SNum $w={38} $ml={8}>110.88</SNum><SNum $w={36} $ml={6}>1.14%</SNum>
        <SAmt $ml={11}>2542<i>亿</i></SAmt>
        <SLabel $ml={9.5}>中小</SLabel><SNum $w={46} $ml={1}>6615.40</SNum><SNum $w={31} $ml={12}>55.86</SNum><SNum $w={36} $ml={9}>0.85%</SNum>
        <SAmt $ml={10}>990.7<i>亿</i></SAmt>
        <SDivider />
        <SLabel $ml={2}>总成交</SLabel><SAmt $ml={19}>4726<i>亿</i></SAmt>
        <SDivider $ml={15} />
        <SLabel $ml={3} $ls={0.2}>华泰证券(上海电信6)</SLabel>
        <StatusIconPack />
      </StatusBar>
    </Page>
  );
}
